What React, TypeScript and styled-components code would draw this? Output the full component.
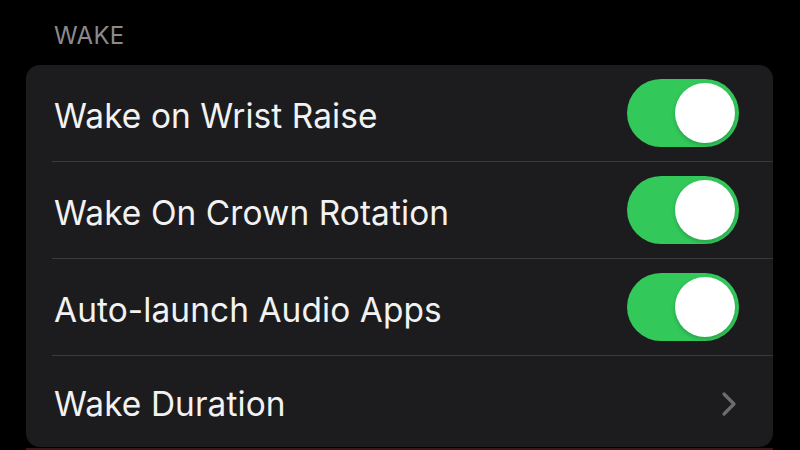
import React from "react";
import styled, { createGlobalStyle } from "styled-components";

const Global = createGlobalStyle`
  html, body { margin: 0; padding: 0; background: #000; }
  body { font-family: Inter, "Noto Sans", sans-serif; -webkit-font-smoothing: antialiased; }
`;

const Page = styled.div`
  width: 800px;
  height: 450px;
  overflow: hidden;
  background: #000;
  display: flex;
  flex-direction: column;
`;

const SectionHeader = styled.div`
  margin: 21px 0 0 54px;
  height: 44px;
  font-size: 24px;
  line-height: 30px;
  color: #8a8a8e;
  letter-spacing: 0.3px;
`;

const Card = styled.div`
  margin-left: 26px;
  width: 747px;
  background: #1c1c1e;
  border-radius: 14px;
  display: flex;
  flex-direction: column;
`;

const Row = styled.div<{ $last?: boolean }>`
  height: ${(p) => (p.$last ? 91 : 96)}px;
  margin-left: 26px;
  padding: 0 34px 0 2px;
  display: flex;
  align-items: center;
  justify-content: space-between;
  border-bottom: ${(p) => (p.$last ? "none" : "1px solid #3a3a3c")};
`;

const Label = styled.span`
  font-size: 33.4px;
  color: #f2f2f2;
  letter-spacing: 0.1px;
  padding-top: 5px;
`;

const Track = styled.div`
  width: 112px;
  height: 68px;
  border-radius: 34px;
  background: #32c85a;
  display: flex;
  align-items: center;
  justify-content: flex-end;
  padding-right: 4px;
  box-sizing: border-box;
`;

const Knob = styled.div`
  width: 60px;
  height: 60px;
  border-radius: 50%;
  background: #fff;
  box-shadow: 0 2px 4px rgba(0, 0, 0, 0.2);
`;

const Chevron = styled.svg`
  width: 16px;
  height: 26px;
  margin-right: 2px;
  margin-top: 4px;
`;

const Footer = styled.div`
  margin: 1px 27px 0 26px;
  height: 2px;
  background: #3a1818;
`;

const Toggle = () => (
  <Track>
    <Knob />
  </Track>
);

export default function App() {
  return (
    <Page>
      <Global />
      <SectionHeader>WAKE</SectionHeader>
      <Card>
        <Row>
          <Label>Wake on Wrist Raise</Label>
          <Toggle />
        </Row>
        <Row>
          <Label>Wake On Crown Rotation</Label>
          <Toggle />
        </Row>
        <Row>
          <Label>Auto-launch Audio Apps</Label>
          <Toggle />
        </Row>
        <Row $last>
          <Label>Wake Duration</Label>
          <Chevron viewBox="0 0 16 26">
            <path d="M3 3 L13 13 L3 23" fill="none" stroke="#6c6c70" strokeWidth="3.2" strokeLinecap="round" strokeLinejoin="round" />
          </Chevron>
        </Row>
      </Card>
      <Footer />
    </Page>
  );
}
